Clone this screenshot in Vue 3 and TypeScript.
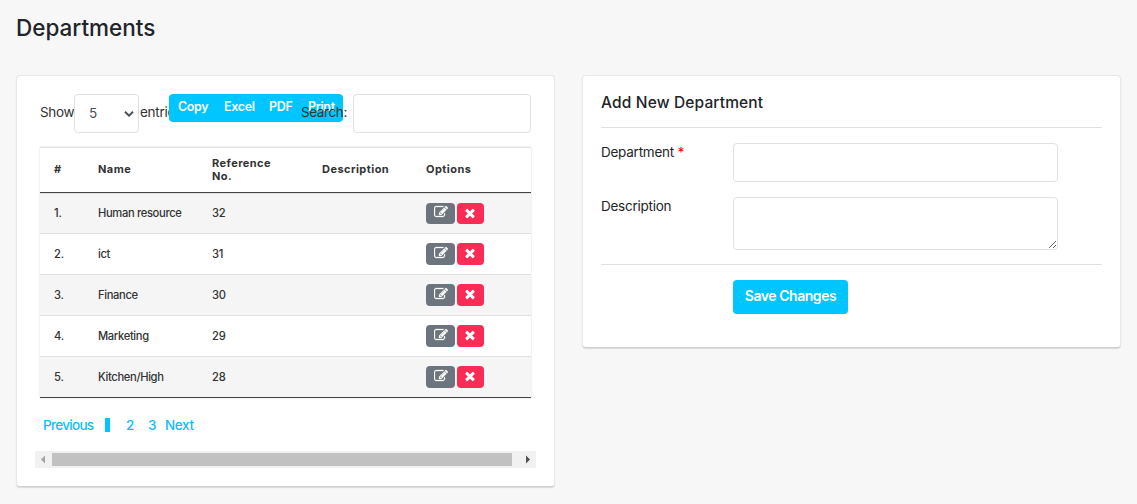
<script setup lang="ts">
import { ref } from 'vue'

interface Department {
  id: number
  name: string
  reference: number
}

const departments: Department[] = [
  { id: 1, name: 'Human resource', reference: 32 },
  { id: 2, name: 'ict', reference: 31 },
  { id: 3, name: 'Finance', reference: 30 },
  { id: 4, name: 'Marketing', reference: 29 },
  { id: 5, name: 'Kitchen/High', reference: 28 },
]

const pageSize = ref('5')
const search = ref('')
const department = ref('')
const description = ref('')
</script>

<template>
  <main class="page">
    <h1 class="page-title">Departments</h1>
    <div class="columns">
      <section class="card list-card">
        <div class="toolbar">
          <label class="length">
            <span class="show">Show</span>
            <span class="select-wrap">
              <select v-model="pageSize" class="control length-select">
                <option>5</option>
                <option>10</option>
              </select>
              <svg class="chevron" viewBox="0 0 12 8"><path d="M2 1.8l4 3.8 4-3.8" /></svg>
            </span>
            <span class="entries">entries</span>
          </label>
          <div class="exports">
            <button class="copy">Copy</button>
            <button class="excel">Excel</button>
            <button class="pdf">PDF</button>
            <button class="print">Print</button>
          </div>
          <label class="search">
            <span class="search-label">Search:</span>
            <input v-model="search" class="control search-input" type="text" />
          </label>
        </div>

        <div class="table">
          <div class="row head">
            <span>#</span>
            <span>Name</span>
            <span>Reference<br />No.</span>
            <span>Description</span>
            <span>Options</span>
          </div>
          <div v-for="d in departments" :key="d.id" class="row item">
            <span>{{ d.id }}.</span>
            <span>{{ d.name }}</span>
            <span>{{ d.reference }}</span>
            <span></span>
            <span class="actions">
              <button class="action edit" aria-label="Edit">
                <svg viewBox="0 0 1792 1792"><path d="M888 1184l116-116-152-152-116 116v56h96v96h56zm440-720q-16-16-33 1l-350 350q-17 17-1 33t33-1l350-350q17-17 1-33zm80 594v190q0 119-84.5 203.5t-203.5 84.5h-832q-119 0-203.5-84.5t-84.5-203.5v-832q0-119 84.5-203.5t203.5-84.5h832q63 0 117 25 15 7 18 23 3 17-9 29l-49 49q-14 14-32 8-23-6-45-6h-832q-66 0-113 47t-47 113v832q0 66 47 113t113 47h832q66 0 113-47t47-113v-126q0-13 9-22l64-64q15-15 35-7t20 29zm-96-738l288 288-672 672h-288v-288zm444 132l-92 92-288-288 92-92q28-28 68-28t68 28l152 152q28 28 28 68t-28 68z" /></svg>
              </button>
              <button class="action remove" aria-label="Delete">
                <svg viewBox="0 0 1792 1792"><path d="M1490 1322q0 40-28 68l-136 136q-28 28-68 28t-68-28l-294-294-294 294q-28 28-68 28t-68-28l-136-136q-28-28-28-68t28-68l294-294-294-294q-28-28-28-68t28-68l136-136q28-28 68-28t68 28l294 294 294-294q28-28 68-28t68 28l136 136q28 28 28 68t-28 68l-294 294 294 294q28 28 28 68z" /></svg>
              </button>
            </span>
          </div>
        </div>

        <nav class="pager">
          <a class="previous">Previous</a>
          <i class="current"></i>
          <a class="two">2</a>
          <a class="three">3</a>
          <a class="next">Next</a>
        </nav>

        <div class="scrollbar">
          <svg class="arrow dim" viewBox="0 0 17 17"><path d="M10 4.500v8L6 8.500z" /></svg>
          <div class="thumb"></div>
          <svg class="arrow end" viewBox="0 0 17 17"><path d="M7 4.500v8l4-4z" /></svg>
        </div>
      </section>

      <section class="card form-card">
        <h2 class="card-title">Add New Department</h2>
        <form class="form" @submit.prevent>
          <div class="field">
            <label class="field-label department-label">Department <b class="required">*</b></label>
            <input v-model="department" class="control field-input" type="text" />
          </div>
          <div class="field">
            <label class="field-label">Description</label>
            <textarea v-model="description" class="control field-area"></textarea>
          </div>
          <div class="form-footer">
            <button class="save">Save Changes</button>
          </div>
        </form>
      </section>
    </div>
  </main>
</template>

<style>
body {
  background: #f7f7f7;
}
</style>

<style scoped>
.page {
  box-sizing: border-box;
  height: 504px;
  padding: 0 16px;
  overflow: hidden;
  background: #f7f7f7;
  color: #212529;
  font-family: Inter, "Liberation Sans", sans-serif;
  font-size: 14px;
}
.page-title {
  margin: 0;
  height: 75px;
  box-sizing: border-box;
  padding-top: 13px;
  font-size: 22.5px;
  line-height: 30px;
  font-weight: 500;
  white-space: nowrap;
}
.columns {
  display: flex;
  align-items: flex-start;
  gap: 27px;
}
.card {
  box-sizing: border-box;
  flex: none;
  width: 539px;
  border: 1px solid #e8e8e8;
  border-bottom-color: #d0d0d0;
  border-radius: 4px;
  background: #fff;
  box-shadow: 0 1px 1px rgba(0, 0, 0, 0.12);
}
.list-card {
  height: 412px;
  padding: 18px 18px 0;
}
.form-card {
  height: 273px;
  padding: 0 18px;
}
.control {
  box-sizing: border-box;
  margin: 0;
  border: 1px solid #e1e1e1;
  border-radius: 4px;
  background: #fff;
  color: #495057;
  font: inherit;
  outline: none;
}
.toolbar {
  position: relative;
  display: flex;
  justify-content: space-between;
  height: 39px;
  padding: 0 5px;
  white-space: nowrap;
}
.length,
.search {
  display: flex;
  align-items: center;
  font-size: 13.5px;
  color: #333;
}
.show,
.entries,
.search-label {
  padding-bottom: 3px;
}
.show {
  width: 34px;
  letter-spacing: -0.35px;
}
.select-wrap {
  display: grid;
  align-items: center;
  width: 65px;
  height: 39px;
}
.length-select {
  grid-area: 1 / 1;
  width: 65px;
  height: 39px;
  padding: 0 14px 2px;
  appearance: none;
}
.chevron {
  grid-area: 1 / 1;
  justify-self: end;
  width: 12px;
  height: 8px;
  margin-right: 4px;
  fill: none;
  stroke: #495057;
  stroke-width: 2;
  pointer-events: none;
}
.entries {
  margin-left: 1px;
  letter-spacing: -0.25px;
}
.exports {
  position: absolute;
  left: 134px;
  top: 0;
  display: flex;
  width: 174px;
  height: 28px;
  border-radius: 4px;
  background: #00c5ff;
}
.exports button {
  padding: 0;
  border: 0;
  background: none;
  color: #fff;
  font: 600 12.5px/24px Inter, sans-serif;
  height: 25px;
  text-align: left;
  letter-spacing: -0.35px;
}
.exports .copy {
  margin-left: 9px;
  width: 46px;
}
.exports .excel {
  width: 45px;
}
.exports .pdf {
  width: 39px;
}
.exports .print {
  width: 30px;
}
.search {
  position: relative;
  gap: 6px;
}
.search-label {
  width: 46px;
  letter-spacing: -0.4px;
}
.search-input {
  width: 178px;
  height: 39px;
  padding: 0 12px;
}
.table {
  width: 491px;
  margin: 14px 0 0 5px;
  border-bottom: 1px solid #444;
  box-shadow: 0 0 2px rgba(0, 0, 0, 0.15);
}
.row {
  box-sizing: border-box;
  display: grid;
  grid-template-columns: 44px 114px 110px 104px 119px;
  align-items: center;
  height: 41px;
  border-top: 1px solid #dee2e6;
  font-size: 11.2px;
  font-weight: 500;
  letter-spacing: -0.2px;
  color: #333;
}
.row > span {
  padding-left: 14px;
  white-space: nowrap;
}
.item > span:not(.actions) {
  padding-bottom: 1px;
}
.item > span:nth-child(2) {
  letter-spacing: -0.35px;
}
.head {
  height: 46px;
  border-bottom: 1px solid #444;
  font-size: 11px;
  font-weight: 700;
  line-height: 13px;
  letter-spacing: 0.45px;
}
.head > span {
  padding-bottom: 1px;
}
.item:nth-child(2) {
  height: 40px;
}
.item:nth-child(even) {
  background: #f5f5f5;
}
.actions {
  display: flex;
  gap: 2px;
}
.action {
  display: flex;
  align-items: center;
  justify-content: center;
  height: 22px;
  padding: 0;
  border: 0;
  border-radius: 4px;
}
.item:nth-child(2) .action {
  height: 21px;
}
.action svg {
  width: 14px;
  height: 14px;
  fill: #fff;
}
.edit {
  width: 29px;
  background: #6c757d;
}
.edit svg {
  margin-bottom: 3px;
  stroke: #fff;
  stroke-width: 36;
}
.remove {
  width: 27px;
  background: #fa2c55;
}
.remove svg {
  margin: 0 1px 2px 0;
}
.pager {
  display: flex;
  align-items: center;
  height: 18px;
  margin: 18px 0 0 8px;
  color: #10bcf8;
  font-size: 13.5px;
  font-weight: 500;
}
.pager a {
  padding-bottom: 1px;
}
.previous {
  width: 62px;
  letter-spacing: -0.7px;
}
.current {
  width: 5px;
  height: 14px;
  margin-right: 16px;
  background: #00c5ff;
}
.two {
  width: 22px;
}
.three {
  width: 17px;
}
.next {
  letter-spacing: -0.4px;
}
.scrollbar {
  display: flex;
  align-items: center;
  width: 501px;
  height: 17px;
  margin-top: 17px;
  background: #f1f1f1;
}
.arrow {
  width: 17px;
  height: 17px;
  fill: #505050;
}
.arrow.dim {
  fill: #a3a3a3;
}
.arrow.end {
  margin-left: auto;
}
.thumb {
  width: 460px;
  height: 13px;
  background: #c1c1c1;
}
.card-title {
  box-sizing: border-box;
  height: 52px;
  margin: 0;
  padding-top: 16px;
  border-bottom: 1px solid #e1e1e1;
  font-size: 15.5px;
  font-weight: 500;
  letter-spacing: 0.15px;
  line-height: 21px;
}
.form {
  display: flex;
  flex-direction: column;
  gap: 15px;
  padding-top: 15px;
}
.field {
  display: grid;
  grid-template-columns: 132px 325px;
  align-items: start;
}
.field-label {
  font-size: 13.5px;
  line-height: 19px;
  letter-spacing: -0.25px;
}
.required {
  color: #f00;
  font-weight: 500;
}
.field-input {
  height: 39px;
  padding: 0 12px;
}
.field-area {
  height: 53px;
  padding: 8px 12px;
  resize: vertical;
}
.form-footer {
  margin-top: -1px;
  padding: 15px 0 0 132px;
  border-top: 1px solid #e1e1e1;
}
.save {
  width: 115px;
  height: 34px;
  padding: 0 0 2px;
  border: 0;
  border-radius: 4px;
  background: #00c5ff;
  color: #fff;
  font: 600 14px/20px Inter, sans-serif;
  letter-spacing: -0.45px;
}
</style>
